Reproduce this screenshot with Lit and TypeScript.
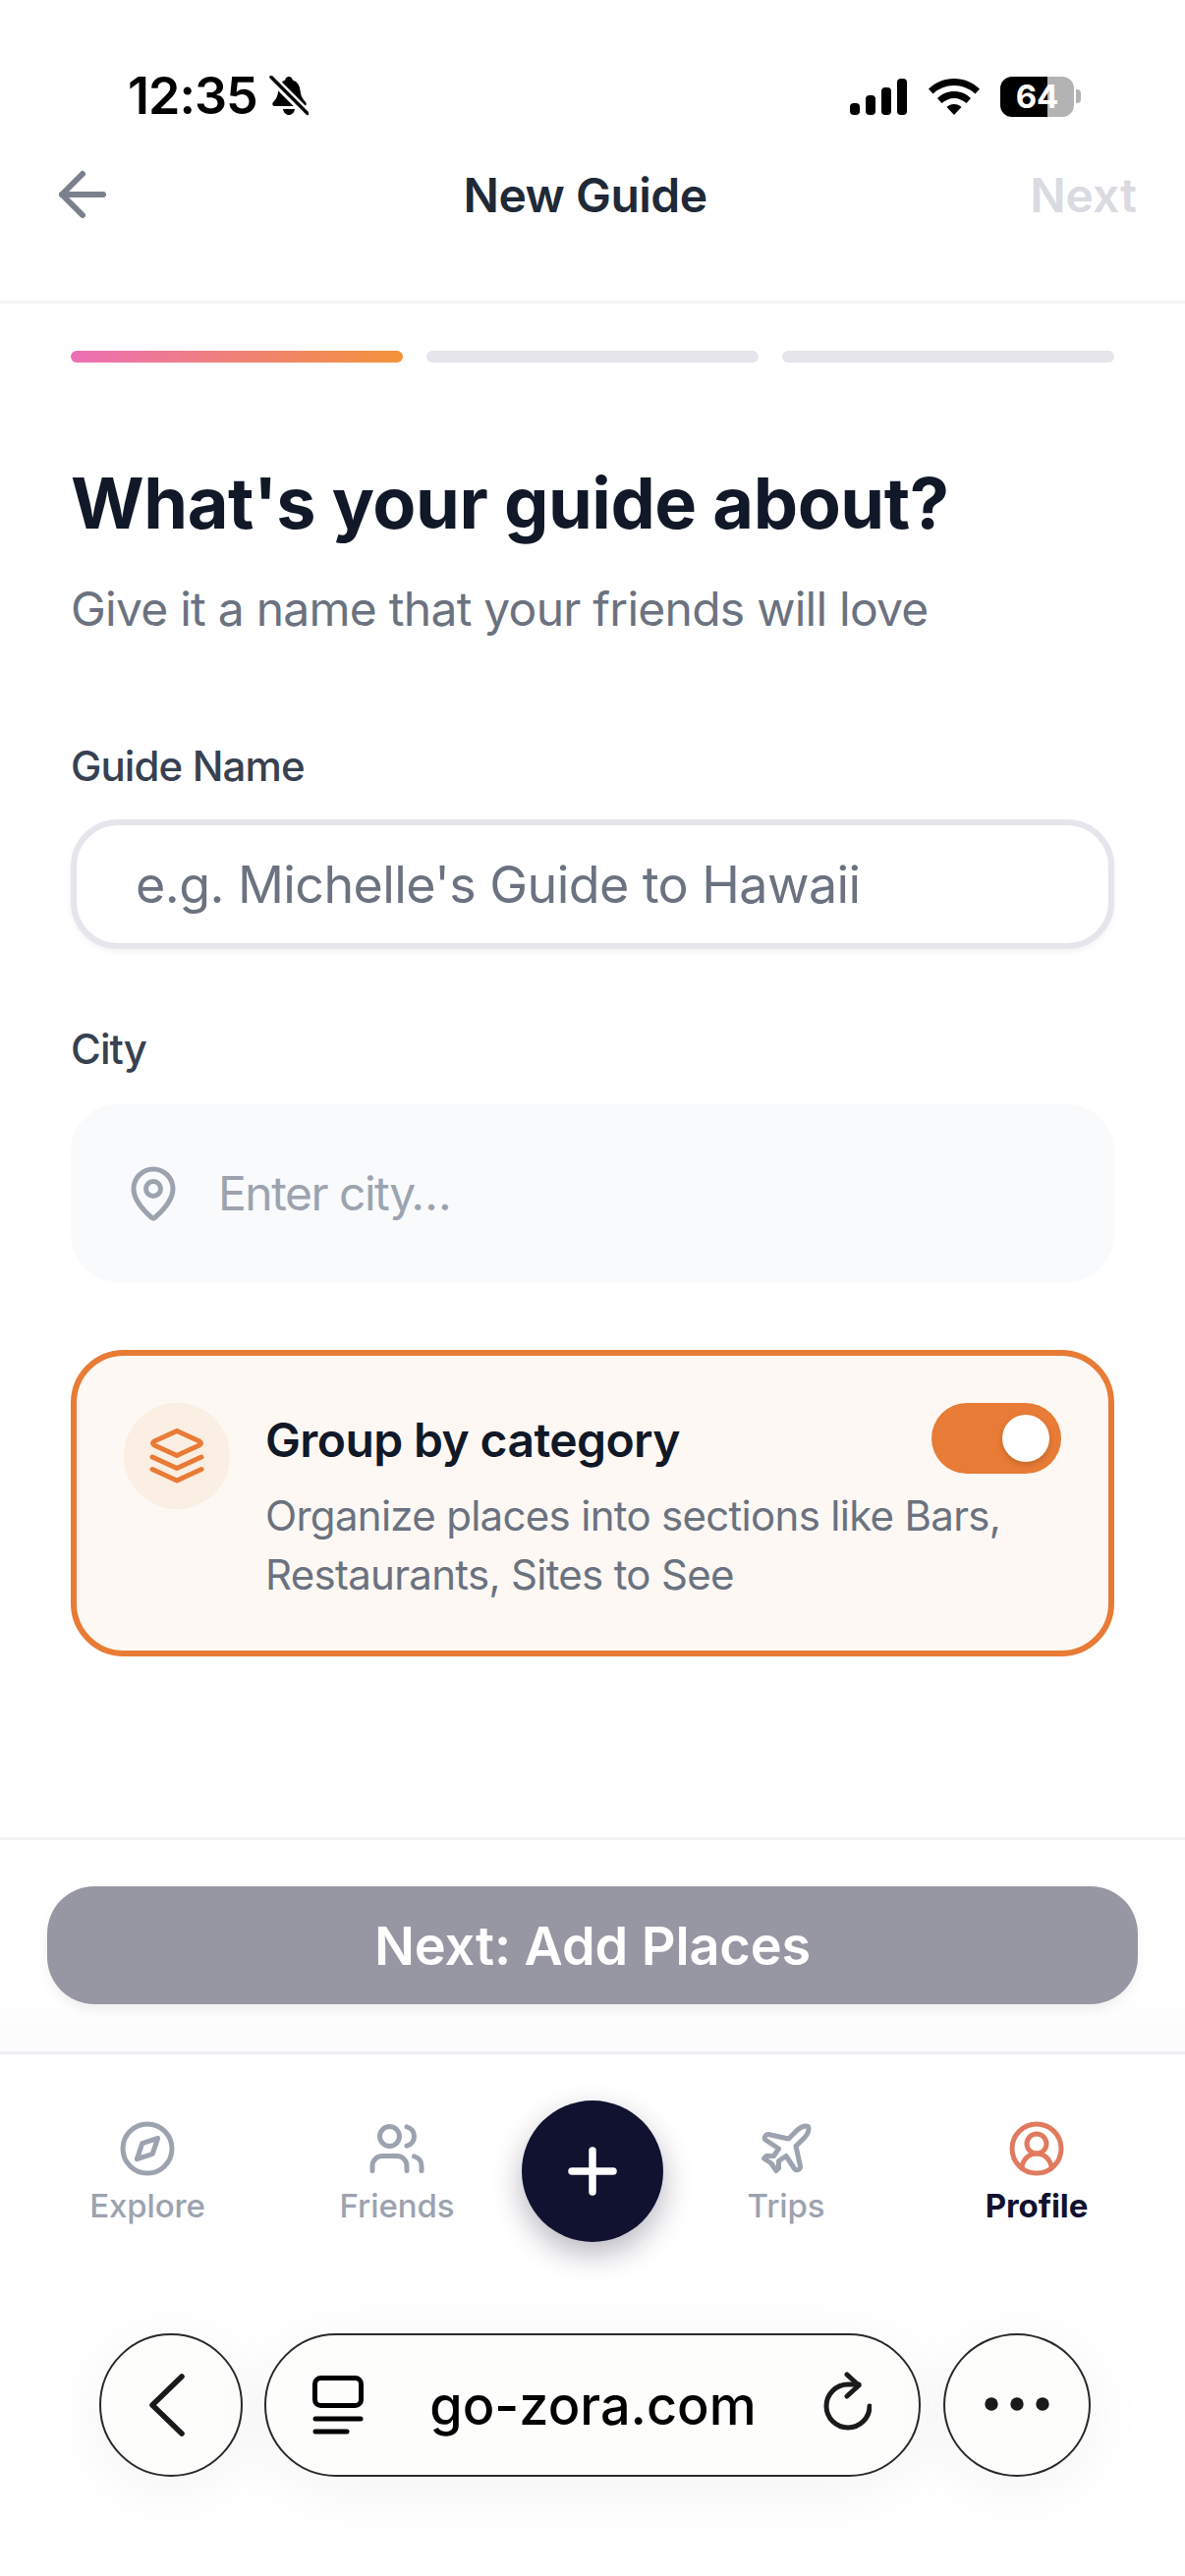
import { LitElement, css, html, svg } from 'lit'
import { customElement } from 'lit/decorators.js'

@customElement('app-root')
export class AppRoot extends LitElement {

  static styles = css`
    :host {
      display: flex;
      flex-direction: column;
      width: 1206px;
      height: 2622px;
      background: #fff;
      font-family: Inter, "Liberation Sans", sans-serif;
      overflow: hidden;
    }

    svg {
      display: block;
      flex-shrink: 0;
    }

    .status {
      display: flex;
      align-items: center;
      height: 50px;
      padding: 73px 0 27px 130px;
      color: #000;
    }

    .time {
      font-size: 52px;
      font-weight: 600;
      line-height: 50px;
      letter-spacing: -1px;
    }

    .bell {
      margin-left: 12px;
    }

    .status-right {
      display: flex;
      align-items: center;
      margin-left: auto;
      margin-right: 106px;
    }

    .wifi {
      margin-left: 22px;
    }

    .battery {
      display: flex;
      align-items: center;
      justify-content: center;
      width: 75px;
      height: 41px;
      margin-left: 21px;
      border-radius: 12px;
      background: linear-gradient(90deg, #000 64%, #b3b3b3 64%);
      color: #fff;
      font-size: 33px;
      font-weight: 700;
    }

    .nub {
      width: 5px;
      height: 14px;
      margin-left: 2px;
      border-radius: 0 4px 4px 0;
      background: #b3b3b3;
    }

    .header {
      display: flex;
      align-items: center;
      justify-content: space-between;
      height: 96px;
      padding: 0 49px 60px 48px;
      border-bottom: 3px solid #f3f4f6;
    }

    .title {
      margin-left: 23px;
      font-size: 48px;
      font-weight: 600;
      letter-spacing: -0.5px;
      color: #1f2937;
    }

    .next {
      font-size: 48px;
      font-weight: 600;
      color: #d9dbe0;
    }

    .progress {
      display: flex;
      gap: 24px;
      margin: 48px 72px 0;
    }

    .bar {
      flex: 1;
      height: 12px;
      border-radius: 6px;
      background: #e5e5eb;
    }

    .bar.active {
      background: linear-gradient(90deg, #ec6fb5, #f2933a);
    }

    .main {
      flex: 1;
      display: flex;
      flex-direction: column;
      padding: 95px 72px 0;
    }

    h1 {
      margin: 0;
      font-size: 72px;
      line-height: 96px;
      font-weight: 700;
      letter-spacing: -0.45px;
      color: #111827;
    }

    .sub {
      margin-top: 24px;
      font-size: 48px;
      line-height: 72px;
      letter-spacing: -0.75px;
      color: #6b7280;
    }

    .label {
      font-size: 42px;
      line-height: 60px;
      font-weight: 500;
      letter-spacing: -0.9px;
      color: #374151;
    }

    .label.first {
      margin-top: 94px;
    }

    .label.second {
      margin-top: 72px;
    }

    .name-field {
      display: flex;
      align-items: center;
      box-sizing: border-box;
      height: 132px;
      margin-top: 24px;
      padding-left: 60px;
      border: 6px solid #e5e5eb;
      border-radius: 48px;
      background: #fff;
      box-shadow: 0 3px 6px rgba(0, 0, 0, 0.05);
      font-size: 52px;
      letter-spacing: -0.58px;
      color: #6b7280;
    }

    .city-field {
      display: flex;
      align-items: center;
      gap: 36px;
      height: 181px;
      margin-top: 26px;
      padding-left: 54px;
      border-radius: 48px;
      background: #f9fafb;
      font-size: 48px;
      letter-spacing: -1.5px;
      color: #9ca3af;
    }

    .card {
      display: flex;
      box-sizing: border-box;
      height: 312px;
      margin-top: 69px;
      padding: 48px;
      border: 6px solid #e87b35;
      border-radius: 54px;
      background: #fdf8f4;
    }

    .card-icon {
      display: flex;
      align-items: center;
      justify-content: center;
      width: 108px;
      height: 108px;
      border-radius: 50%;
      background: #fbeee2;
      flex-shrink: 0;
    }

    .card-body {
      flex: 1;
      margin-left: 36px;
    }

    .card-top {
      display: flex;
      justify-content: space-between;
    }

    .card-title {
      margin-top: 8px;
      font-size: 48px;
      line-height: 60px;
      font-weight: 600;
      letter-spacing: -0.6px;
      color: #111827;
    }

    .toggle {
      display: flex;
      align-items: center;
      justify-content: flex-end;
      box-sizing: border-box;
      width: 132px;
      height: 72px;
      padding-right: 12px;
      border-radius: 36px;
      background: #e87b35;
    }

    .knob {
      width: 48px;
      height: 48px;
      border-radius: 50%;
      background: #fff;
      box-shadow: 0 3px 6px rgba(0, 0, 0, 0.15);
    }

    .card-desc {
      margin-top: 13px;
      font-size: 42px;
      line-height: 60px;
      letter-spacing: -0.7px;
      color: #6b7280;
    }

    .footer {
      padding: 47px 48px 48px;
      border-top: 3px solid #f3f4f6;
      background: linear-gradient(180deg, #fff 70%, #fbfbfc 100%);
    }

    .cta {
      display: flex;
      align-items: center;
      justify-content: center;
      height: 120px;
      border-radius: 48px;
      background: #9797a3;
      box-shadow: 0 6px 12px rgba(0, 0, 0, 0.06);
      color: #fff;
      font-size: 54px;
      font-weight: 600;
      letter-spacing: -0.1px;
    }

    .nav {
      display: flex;
      align-items: flex-start;
      height: 241px;
      border-top: 3px solid #eeeef3;
      background: #fff;
    }

    .tab {
      display: flex;
      flex-direction: column;
      align-items: center;
      width: 200px;
      padding-top: 66px;
      font-size: 33px;
      line-height: 42px;
      font-weight: 500;
      letter-spacing: -0.1px;
      color: #9ca3af;
    }

    .tab span {
      margin-top: 7px;
    }

    .tab.explore {
      margin-left: 50px;
    }

    .tab.friends {
      margin-left: 54px;
    }

    .tab.trips {
      margin-left: 25px;
    }

    .tab.profile {
      margin-left: 55px;
      color: #111130;
      font-weight: 700;
    }

    .plus {
      display: flex;
      align-items: center;
      justify-content: center;
      width: 144px;
      height: 144px;
      margin: 47px 0 0 27px;
      border-radius: 50%;
      background: #111130;
      box-shadow: 0 12px 30px rgba(17, 17, 48, 0.3);
    }

    .browser {
      flex: 0 0 290px;
      display: flex;
      align-items: flex-start;
      box-sizing: border-box;
      padding: 43px 0 0 101px;
      background: #fff;
    }

    .round {
      display: flex;
      align-items: center;
      justify-content: center;
      box-sizing: border-box;
      width: 146px;
      height: 146px;
      border: 2px solid #2a2a2a;
      border-radius: 50%;
      background: #fdfdfb;
      box-shadow: 0 12px 70px rgba(0, 0, 0, 0.05);
    }

    .round.more {
      width: 150px;
      margin-left: 23px;
    }

    .chev {
      margin-right: 9px;
    }

    .dots {
      margin-bottom: 3px;
    }

    .pill {
      display: flex;
      align-items: center;
      box-sizing: border-box;
      width: 668px;
      height: 146px;
      margin-left: 22px;
      padding: 0 48px 0 47px;
      border: 2px solid #2a2a2a;
      border-radius: 73px;
      background: #fdfdfb;
      box-shadow: 0 12px 70px rgba(0, 0, 0, 0.05);
    }

    .reload {
      margin-bottom: 6px;
    }

    .url {
      flex: 1;
      padding-left: 2px;
      text-align: center;
      font-size: 54px;
      font-weight: 500;
      color: #000;
    }
  `;

  private _lucide(size: number, stroke: string, width: number, body: unknown) {
    return html`<svg width=${size} height=${size} viewBox="0 0 24 24" fill="none" stroke=${stroke} stroke-width=${width} stroke-linecap="round" stroke-linejoin="round">${body}</svg>`;
  }

  render() {
    return html`
      <div class="status">
        <div class="time">12:35</div>
        <svg class="bell" width="40" height="42" viewBox="0 0 40 42">
          <path d="M20 1c2 0 3.500 1.500 3.800 3.500 5 1.500 7.200 5.500 7.700 10.500.4 5 2 8.500 5.500 12 1.500 2 .5 4-2 4H6c-2.500 0-3.500-2-2-4 3-3 4.500-6 5-10l1-6C11 8 13.500 5.500 16.200 4.500 16.500 2.500 18 1 20 1z" fill="#000"/>
          <path d="M14 34h12c-.5 3.500-3 6-6 6s-5.500-2.500-6-6z" fill="#000"/>
          <path d="M1 1l38 38" stroke="#fff" stroke-width="9"/>
          <path d="M2 1.500l37 37" stroke="#000" stroke-width="3.500" stroke-linecap="round"/>
        </svg>
        <div class="status-right">
          <svg width="58" height="37" viewBox="0 0 58 37" fill="#000">
            <rect x="0" y="25" width="10" height="12" rx="4"/>
            <rect x="16" y="17" width="10" height="20" rx="4"/>
            <rect x="32" y="9" width="10" height="28" rx="4"/>
            <rect x="48" y="0" width="10" height="37" rx="4"/>
          </svg>
          <svg class="wifi" width="52" height="37" viewBox="0 0 52 37" fill="#000">
            <path d="M26 0c10 0 19 4 26 10.500l-4.500 5C41.500 10 34 7 26 7S10.500 10 4.500 15.500L0 10.500C7 4 16 0 26 0z"/>
            <path d="M26 13c6.500 0 12.500 2.500 17 7l-4.500 5c-3.500-3-8-5-12.500-5s-9 2-12.500 5L9 20c4.500-4.500 10.500-7 17-7z"/>
            <path d="M26 26c3 0 5.500 1 7.500 3L26 37l-7.500-8c2-2 4.500-3 7.500-3z"/>
          </svg>
          <div class="battery">64</div>
          <div class="nub"></div>
        </div>
      </div>

      <div class="header">
        ${this._lucide(72, '#7a808c', 2, svg`<path d="m12 19-7-7 7-7"/><path d="M19 12H5"/>`)}
        <div class="title">New Guide</div>
        <div class="next">Next</div>
      </div>

      <div class="progress">
        <div class="bar active"></div>
        <div class="bar"></div>
        <div class="bar"></div>
      </div>

      <div class="main">
        <h1>What's your guide about?</h1>
        <div class="sub">Give it a name that your friends will love</div>

        <div class="label first">Guide Name</div>
        <div class="name-field">e.g. Michelle's Guide to Hawaii</div>

        <div class="label second">City</div>
        <div class="city-field">
          ${this._lucide(60, '#9ca3af', 2, svg`<path d="M20 10c0 4.993-5.539 10.193-7.399 11.799a1 1 0 0 1-1.202 0C9.539 20.193 4 14.993 4 10a8 8 0 0 1 16 0"/><circle cx="12" cy="10" r="3"/>`)}
          <span>Enter city…</span>
        </div>

        <div class="card">
          <div class="card-icon">
            <svg width="56" height="56" viewBox="0 0 56 56" fill="none" stroke="#e87b35" stroke-width="5" stroke-linecap="round" stroke-linejoin="round">
              <path d="M28 2.500 51 13q3 2 0 4L28 27.500 5 17q-3-2 0-4Z"/>
              <path d="M3 29l25 11.500L53 29"/>
              <path d="M3 41.500 28 53l25-11.500"/>
            </svg>
          </div>
          <div class="card-body">
            <div class="card-top">
              <div class="card-title">Group by category</div>
              <div class="toggle"><div class="knob"></div></div>
            </div>
            <div class="card-desc">Organize places into sections like Bars,<br>Restaurants, Sites to See</div>
          </div>
        </div>
      </div>

      <div class="footer">
        <div class="cta">Next: Add Places</div>
      </div>

      <div class="nav">
        <div class="tab explore">
          ${this._lucide(60, '#9ca3af', 2, svg`<circle cx="12" cy="12" r="10"/><polygon points="16.240 7.760 14.120 14.120 7.760 16.240 9.880 9.880"/>`)}
          <span>Explore</span>
        </div>
        <div class="tab friends">
          ${this._lucide(60, '#9ca3af', 2, svg`<path d="M16 21v-2a4 4 0 0 0-4-4H6a4 4 0 0 0-4 4v2"/><circle cx="9" cy="7" r="4"/><path d="M22 21v-2a4 4 0 0 0-3-3.870"/><path d="M16 3.130a4 4 0 0 1 0 7.750"/>`)}
          <span>Friends</span>
        </div>
        <div class="plus">
          ${this._lucide(72, '#fff', 2.500, svg`<path d="M5 12h14"/><path d="M12 5v14"/>`)}
        </div>
        <div class="tab trips">
          ${this._lucide(60, '#9ca3af', 2, svg`<path d="M17.800 19.200 16 11l3.500-3.500C21 6 21.500 4 21 3c-1-.5-3 0-4.500 1.500L13 8 4.800 6.200c-.5-.1-.9.1-1.100.5l-.3.5c-.2.5-.1 1 .3 1.300L9 12l-2 3H4l-1 1 3 2 2 3 1-1v-3l3-2 3.500 5.300c.3.4.8.5 1.300.3l.5-.2c.4-.3.6-.7.5-1.200z"/>`)}
          <span>Trips</span>
        </div>
        <div class="tab profile">
          ${this._lucide(60, '#e07a5f', 2, svg`<path d="M18 20a6 6 0 0 0-12 0"/><circle cx="12" cy="10" r="4"/><circle cx="12" cy="12" r="10"/>`)}
          <span>Profile</span>
        </div>
      </div>

      <div class="browser">
        <div class="round">
          <svg class="chev" width="36" height="64" viewBox="0 0 36 64" fill="none" stroke="#1a1a1a" stroke-width="5.500" stroke-linecap="round" stroke-linejoin="round">
            <path d="M33 3 3 32l30 29"/>
          </svg>
        </div>
        <div class="pill">
          <svg width="52" height="60" viewBox="0 0 52 60" fill="none" stroke="#000" stroke-linecap="round">
            <rect x="2.500" y="2.500" width="47" height="28" rx="6" stroke-width="5"/>
            <path d="M3 44h46" stroke-width="5"/>
            <path d="M3 57h32" stroke-width="5"/>
          </svg>
          <div class="url">go-zora.com</div>
          <svg class="reload" width="52" height="62" viewBox="0 0 52 62" fill="none" stroke="#1a1a1a" stroke-width="5" stroke-linecap="round" stroke-linejoin="round">
            <path d="M50 35a22 22 0 1 1-22-22h11"/>
            <path d="M27 3l12 11-12 11"/>
          </svg>
        </div>
        <div class="round more">
          <svg class="dots" width="68" height="16" viewBox="0 0 68 16" fill="#1a1a1a">
            <circle cx="8" cy="8" r="6.700"/>
            <circle cx="34" cy="8" r="6.700"/>
            <circle cx="60" cy="8" r="6.700"/>
          </svg>
        </div>
      </div>
    `;
  }
}

declare global {
  interface HTMLElementTagNameMap {
    'app-root': AppRoot
  }
}
